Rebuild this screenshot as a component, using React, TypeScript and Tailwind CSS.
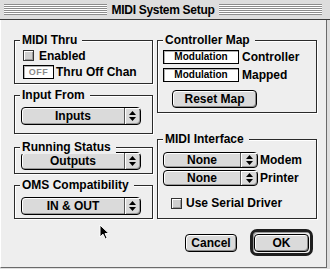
import React from "react";

const font = "font-['Liberation_Sans',Arial,sans-serif]";

function Arrows() {
  return (
    <svg width="7" height="10" viewBox="0 0 7 10">
      <path d="M3.5 0 L7 4 L0 4 Z" fill="#000" />
      <path d="M0 6 L7 6 L3.5 10 Z" fill="#000" />
    </svg>
  );
}

function Popup({ text, w, h, aw }: { text: string; w: string; h: string; aw: string }) {
  return (
    <div
      className={`flex ${w} ${h} rounded-[4px] border border-black bg-[#dadada] shadow-[inset_1px_1px_0_#ffffff,inset_-1px_-1px_0_#9a9a9a]`}
    >
      <div className="flex flex-1 items-center justify-center text-[12px] font-bold leading-none text-black">
        {text}
      </div>
      <div
        className={`flex ${aw} items-center justify-center border-l border-[#555] shadow-[inset_1px_1px_0_#ffffff]`}
      >
        <Arrows />
      </div>
    </div>
  );
}

function Group({
  label,
  h,
  className,
  children,
}: {
  label: string;
  h: string;
  className?: string;
  children?: React.ReactNode;
}) {
  return (
    <div
      className={`relative ${h} border border-[#2a2a2a] shadow-[inset_1px_1px_0_#ffffff,1px_1px_0_#ffffff] ${className ?? ""}`}
    >
      <div className="absolute left-[5px] top-[-8px] bg-[#eeeeee] pl-[2px] pr-[5px] text-[12px] font-bold leading-[14px] text-black">
        {label}
      </div>
      {children}
    </div>
  );
}

function CheckBox() {
  return (
    <div className="h-[11px] w-[11px] border border-[#333] bg-[#cfcfcf] shadow-[inset_1px_1px_0_#ffffff,inset_-1px_-1px_0_#9a9a9a]" />
  );
}

function Field({ children, w, className }: { children: React.ReactNode; w: string; className?: string }) {
  return (
    <div
      className={`flex h-[14px] ${w} items-center justify-center border border-black bg-white shadow-[inset_1px_1px_0_#b0b0b0] ${className ?? ""}`}
    >
      {children}
    </div>
  );
}

function Button({ children, w }: { children: React.ReactNode; w: string }) {
  return (
    <div
      className={`flex h-[18px] ${w} items-center justify-center rounded-[4px] border border-black bg-[#dadada] text-[12px] font-bold leading-none text-black shadow-[inset_1px_1px_0_#ffffff,inset_-1px_-1px_0_#8a8a8a]`}
    >
      {children}
    </div>
  );
}

export default function App() {
  return (
    <div className={`relative h-[269px] w-[330px] overflow-hidden bg-[#dedede] ${font}`}>
      {/* Title bar */}
      <div className="flex h-[20px] w-[330px] items-center border-b border-[#3a3a3a] bg-[#dddddd] pl-[4px] pr-[8px]">
        <div className="h-[11px] flex-1 bg-[repeating-linear-gradient(to_bottom,#8c8c8c_0px,#8c8c8c_1px,#ffffff_1px,#ffffff_2px)]" />
        <div className="px-[5px] text-[12px] font-bold leading-none tracking-[-0.3px] text-black">
          MIDI System Setup
        </div>
        <div className="h-[11px] flex-1 bg-[repeating-linear-gradient(to_bottom,#8c8c8c_0px,#8c8c8c_1px,#ffffff_1px,#ffffff_2px)]" />
      </div>

      {/* Body */}
      <div className="flex h-[248px] w-[327px] flex-col border-b border-l border-r border-b-[#6a6a6a] border-l-[#ffffff] border-r-[#6a6a6a] bg-[#eeeeee]">
        <div className="flex gap-[4px] pl-[13px] pt-[20px]">
          {/* Left column */}
          <div className="flex w-[139px] flex-col">
            <Group label="MIDI Thru" h="h-[44px]">
              <div className="flex flex-col pl-[8px] pt-[9px]">
                <div className="flex h-[11px] items-center">
                  <CheckBox />
                  <span className="ml-[5px] text-[12px] font-bold leading-none text-black">Enabled</span>
                </div>
                <div className="mt-[4px] flex items-center">
                  <Field w="w-[31px]">
                    <span className="text-[9px] font-bold leading-none tracking-[0.5px] text-[#8a8a8a]">OFF</span>
                  </Field>
                  <span className="ml-[2px] text-[12px] font-bold leading-none text-black">Thru Off Chan</span>
                </div>
              </div>
            </Group>
            <Group label="Input From" h="h-[39px]" className="mt-[11px]">
              <div className="pl-[6px] pt-[11px]">
                <Popup text="Inputs" w="w-[120px]" h="h-[18px]" aw="w-[16px]" />
              </div>
            </Group>
            <Group label="Running Status" h="h-[27px]" className="mt-[13px]">
              <div className="pl-[6px] pt-[4px]">
                <Popup text="Outputs" w="w-[120px]" h="h-[18px]" aw="w-[16px]" />
              </div>
            </Group>
            <Group label="OMS Compatibility" h="h-[34px]" className="mt-[11px]">
              <div className="pl-[6px] pt-[11px]">
                <Popup text="IN & OUT" w="w-[120px]" h="h-[18px]" aw="w-[16px]" />
              </div>
            </Group>
          </div>

          {/* Right column */}
          <div className="flex w-[160px] flex-col">
            <Group label="Controller Map" h="h-[73px]">
              <div className="flex flex-col pl-[5px] pt-[9px]">
                <div className="flex items-center">
                  <Field w="w-[76px]">
                    <span className="text-[10px] font-bold leading-none text-black">Modulation</span>
                  </Field>
                  <span className="ml-[3px] text-[12px] font-bold leading-none text-black">Controller</span>
                </div>
                <div className="mt-[4px] flex items-center">
                  <Field w="w-[76px]">
                    <span className="text-[10px] font-bold leading-none text-black">Modulation</span>
                  </Field>
                  <span className="ml-[3px] text-[12px] font-bold leading-none text-black">Mapped</span>
                </div>
                <div className="ml-[9px] mt-[8px]">
                  <Button w="w-[85px]">Reset Map</Button>
                </div>
              </div>
            </Group>
            <Group label="MIDI Interface" h="h-[80px]" className="mt-[26px]">
              <div className="flex flex-col pl-[5px] pt-[12px]">
                <div className="flex items-center">
                  <Popup text="None" w="w-[95px]" h="h-[16px]" aw="w-[17px]" />
                  <span className="ml-[2px] text-[12px] font-bold leading-none text-black">Modem</span>
                </div>
                <div className="mt-[2px] flex items-center">
                  <Popup text="None" w="w-[95px]" h="h-[16px]" aw="w-[17px]" />
                  <span className="ml-[2px] text-[12px] font-bold leading-none text-black">Printer</span>
                </div>
                <div className="ml-[8px] mt-[11px] flex items-center">
                  <CheckBox />
                  <span className="ml-[4px] text-[12px] font-bold leading-none text-black">Use Serial Driver</span>
                </div>
              </div>
            </Group>
          </div>
        </div>

        {/* Buttons */}
        <div className="mt-[10px] flex items-center justify-end gap-[13px] pr-[13px]">
          <Button w="w-[52px]">Cancel</Button>
          <div className="flex h-[27px] w-[63px] items-center justify-center rounded-[7px] border-[3px] border-[#1e1e1e] bg-[#eeeeee] shadow-[inset_1px_1px_0_#9a9a9a]">
            <Button w="w-[55px]">OK</Button>
          </div>
        </div>
      </div>

      {/* Mouse cursor */}
      <svg className="absolute left-[99px] top-[224px]" width="12" height="17" viewBox="0 0 12 17">
        <path
          d="M1 1 L1 13 L4 10.2 L6.3 15 L8.2 14.2 L6 9.6 L10 9.6 Z"
          fill="#000"
          stroke="#fff"
          strokeWidth="1"
          strokeLinejoin="miter"
        />
      </svg>
    </div>
  );
}
